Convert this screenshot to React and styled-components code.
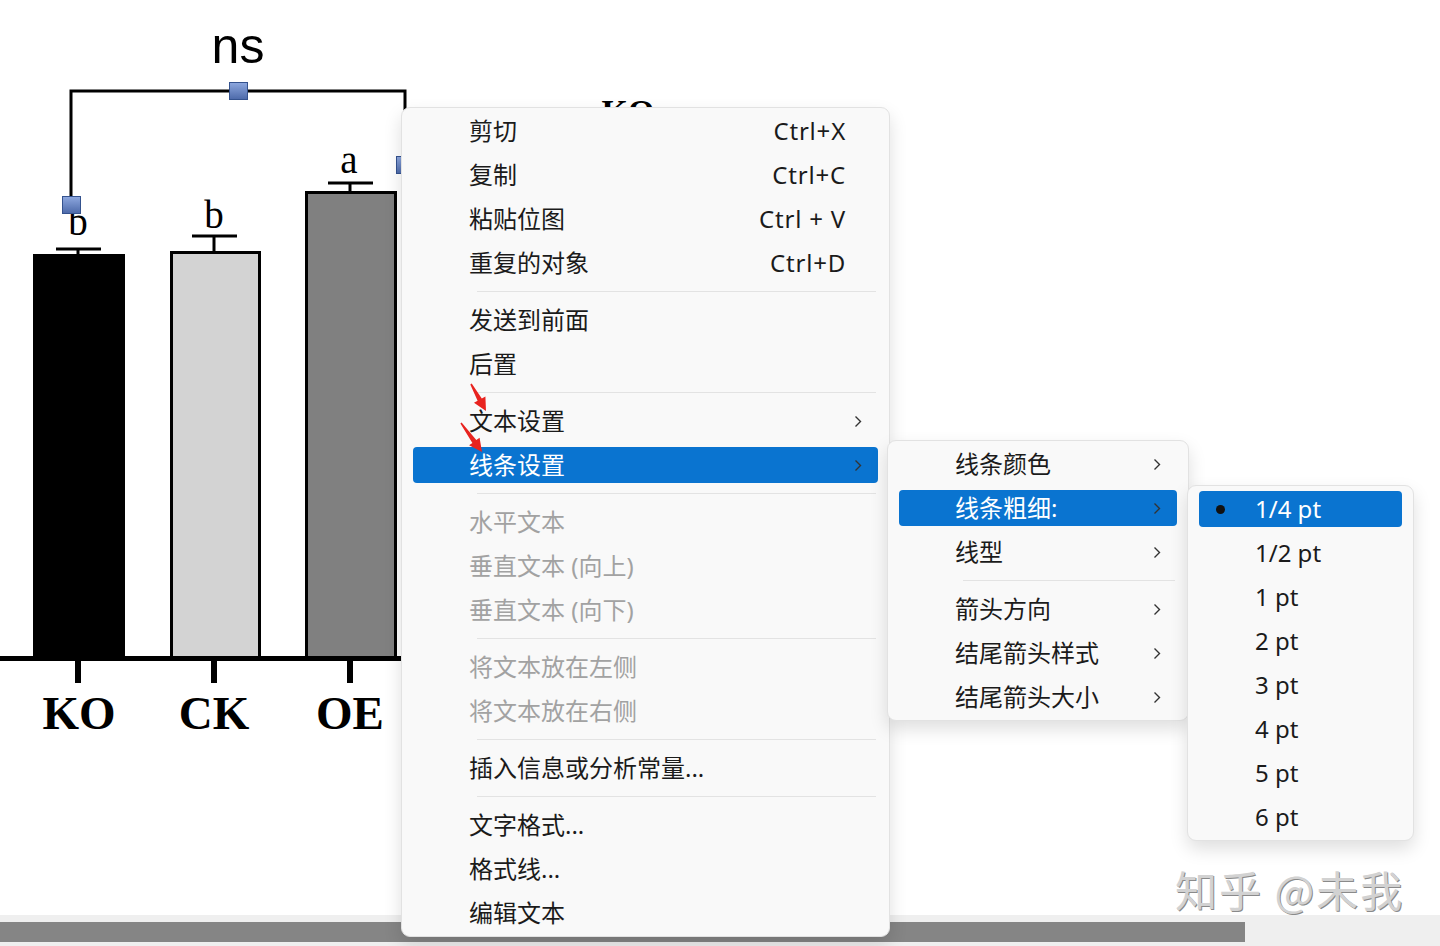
import React from 'react'
import styled, { createGlobalStyle } from 'styled-components'

const GlobalStyle = createGlobalStyle`
  html, body {
    margin: 0;
    padding: 0;
    background: #ffffff;
  }
  body {
    font-family: 'Noto Sans', 'Noto Sans CJK SC', sans-serif;
  }
`

const Page = styled.div`
  position: relative;
  width: 1440px;
  height: 946px;
  overflow: hidden;
  display: flex;
  flex-direction: column;
  background: #ffffff;
`

const Canvas = styled.div`
  flex: 1;
  background: #ffffff;
`

const ScrollTrack = styled.div`
  height: 31px;
  box-sizing: border-box;
  padding: 7px 0 4px;
  background: #efefef;
`

const ScrollThumb = styled.div`
  width: 1245px;
  height: 100%;
  background: #858585;
`

const Menu = styled.div`
  position: absolute;
  left: ${p => p.$x}px;
  top: ${p => p.$y}px;
  width: ${p => p.$w}px;
  box-sizing: border-box;
  display: flex;
  flex-direction: column;
  padding: 1px 0;
  background: #f9f9f9;
  border: 1px solid #e2e2e2;
  border-radius: 9px;
  box-shadow: 0 8px 18px rgba(0, 0, 0, 0.13);
  font-family: 'Noto Sans', 'Noto Sans CJK SC', sans-serif;
  font-size: 24px;
`

const Item = styled.div`
  display: flex;
  align-items: center;
  height: 36px;
  margin: 4px 11px;
  padding: 0 16px 0 14px;
  border-radius: 4px;
  line-height: 1;
  background: ${p => (p.$active ? '#0a74d0' : 'transparent')};
  color: ${p => (p.$active ? '#ffffff' : p.$disabled ? '#a2a2a2' : '#1b1b1b')};
`

const Lead = styled.span`
  width: 42px;
  flex: none;
  display: flex;
  align-items: center;
  padding-left: 3px;
  box-sizing: border-box;
`

const Bullet = styled.span`
  width: 9px;
  height: 9px;
  border-radius: 50%;
  background: #111;
`

const Label = styled.span`
  flex: 1;
  white-space: nowrap;
`

const Shortcut = styled.span`
  white-space: pre;
  letter-spacing: 0.8px;
  color: #1b1b1b;
`

const ArrowCell = styled.span`
  width: 16px;
  flex: none;
  display: flex;
  justify-content: flex-end;
  align-items: center;
`

const Separator = styled.div`
  height: 1px;
  flex: none;
  margin: 6px 13px 6px 75px;
  background: #e3e3e3;
`

const Watermark = styled.div`
  position: absolute;
  left: 1175px;
  top: 858px;
  font-family: 'Noto Sans CJK SC', sans-serif;
  font-size: 42px;
  letter-spacing: 2px;
  color: #d2d2d2;
  text-shadow: 1px 1px 0 #8a8a8a;
  white-space: pre;
`

const Marker = styled.svg`
  position: absolute;
  left: 0;
  top: 0;
  pointer-events: none;
`

const Chevron = () => (
  <svg width="8" height="13" viewBox="0 0 8 13">
    <path d="M1.5 1.5 L6.5 6.5 L1.5 11.5" fill="none" stroke="#333" strokeWidth="1.4" />
  </svg>
)

// red hand-drawn style arrow, from tail to tip
const arrowPoints = (tx, ty, hx, hy) => {
  const dx = hx - tx
  const dy = hy - ty
  const len = Math.hypot(dx, dy)
  const ux = dx / len
  const uy = dy / len
  const px = uy
  const py = -ux
  const bx = hx - ux * 13
  const by = hy - uy * 13
  const pt = (x, y) => `${x.toFixed(1)},${y.toFixed(1)}`
  return [
    pt(tx + px * 0.8, ty + py * 0.8),
    pt(bx + px * 2.4, by + py * 2.4),
    pt(bx + px * 6.5, by + py * 6.5),
    pt(hx, hy),
    pt(bx - px * 6.5, by - py * 6.5),
    pt(bx - px * 2.4, by - py * 2.4),
    pt(tx - px * 0.8, ty - py * 0.8),
  ].join(' ')
}

const Arrows = () => (
  <Marker width="1440" height="946">
    <polygon points={arrowPoints(471, 384, 486, 411)} fill="#e8231f" />
    <polygon points={arrowPoints(461, 423, 482, 452)} fill="#e8231f" />
  </Marker>
)

const mainItems = [
  { label: '剪切', key: 'Ctrl+X' },
  { label: '复制', key: 'Ctrl+C' },
  { label: '粘贴位图', key: 'Ctrl + V' },
  { label: '重复的对象', key: 'Ctrl+D' },
  'sep',
  { label: '发送到前面' },
  { label: '后置' },
  'sep',
  { label: '文本设置', sub: true },
  { label: '线条设置', sub: true, active: true },
  'sep',
  { label: '水平文本', disabled: true },
  { label: '垂直文本 (向上)', disabled: true },
  { label: '垂直文本 (向下)', disabled: true },
  'sep',
  { label: '将文本放在左侧', disabled: true },
  { label: '将文本放在右侧', disabled: true },
  'sep',
  { label: '插入信息或分析常量...' },
  'sep',
  { label: '文字格式...' },
  { label: '格式线...' },
  { label: '编辑文本' },
]

const lineItems = [
  { label: '线条颜色', sub: true },
  { label: '线条粗细:', sub: true, active: true },
  { label: '线型', sub: true },
  'sep',
  { label: '箭头方向', sub: true },
  { label: '结尾箭头样式', sub: true },
  { label: '结尾箭头大小', sub: true },
]

const weightItems = [
  { label: '1/4 pt', active: true, checked: true },
  { label: '1/2 pt' },
  { label: '1 pt' },
  { label: '2 pt' },
  { label: '3 pt' },
  { label: '4 pt' },
  { label: '5 pt' },
  { label: '6 pt' },
]

const MenuList = ({ items, x, y, w }) => (
  <Menu $x={x} $y={y} $w={w}>
    {items.map((it, i) =>
      it === 'sep' ? (
        <Separator key={i} />
      ) : (
        <Item key={i} $active={it.active} $disabled={it.disabled}>
          <Lead>{it.checked && <Bullet />}</Lead>
          <Label>{it.label}</Label>
          {it.key && <Shortcut>{it.key}</Shortcut>}
          <ArrowCell>{it.sub && <Chevron />}</ArrowCell>
        </Item>
      )
    )}
  </Menu>
)

// the bar chart behind the menus
const Handle = ({ x, y }) => (
  <rect x={x} y={y} width="18" height="17" fill="url(#handle)" stroke="#34528e" strokeWidth="1" />
)

const ErrorBar = ({ cx, top, bottom }) => (
  <g stroke="#000" strokeWidth="3">
    <line x1={cx - 22} y1={top} x2={cx + 23} y2={top} />
    <line x1={cx} y1={top} x2={cx} y2={bottom} />
  </g>
)

const serif = "'Liberation Serif', 'Times New Roman', serif"

const Chart = () => (
  <svg width="700" height="760" viewBox="0 0 700 760" style={{ display: 'block' }}>
    <defs>
      <linearGradient id="handle" x1="0" y1="0" x2="0" y2="1">
        <stop offset="0" stopColor="#8ea8df" />
        <stop offset="1" stopColor="#4c69a9" />
      </linearGradient>
    </defs>
    <text x="238" y="63" textAnchor="middle" fontFamily="'Liberation Sans', Arial, sans-serif" fontSize="50">
      ns
    </text>
    <text x="628" y="123" textAnchor="middle" fontFamily={serif} fontWeight="bold" fontSize="34">
      KO
    </text>
    <path d="M71 205 V91 H405 V130" fill="none" stroke="#000" strokeWidth="3" />

    <rect x="33" y="254" width="92" height="404" fill="#000" />
    <rect x="171.5" y="252.5" width="88" height="405" fill="#d3d3d3" stroke="#000" strokeWidth="3" />
    <rect x="306.5" y="192.5" width="89" height="465" fill="#808080" stroke="#000" strokeWidth="3" />

    <ErrorBar cx={78} top={249} bottom={254} />
    <ErrorBar cx={214} top={236} bottom={252} />
    <ErrorBar cx={350} top={183} bottom={192} />

    <text x="78" y="235" textAnchor="middle" fontFamily={serif} fontSize="39">b</text>
    <text x="214" y="228" textAnchor="middle" fontFamily={serif} fontSize="39">b</text>
    <text x="349" y="173" textAnchor="middle" fontFamily={serif} fontSize="39">a</text>

    <Handle x={229.5} y={82.5} />
    <Handle x={62.5} y={196.5} />
    <Handle x={396.5} y={156.5} />

    <rect x="0" y="656" width="402" height="5" fill="#000" />
    <rect x="75" y="661" width="6" height="22" fill="#000" />
    <rect x="211" y="661" width="6" height="22" fill="#000" />
    <rect x="347" y="661" width="6" height="22" fill="#000" />

    <g fontFamily={serif} fontWeight="bold" fontSize="47" textAnchor="middle">
      <text x="79" y="729">KO</text>
      <text x="214" y="729">CK</text>
      <text x="350" y="729">OE</text>
    </g>
  </svg>
)

export default function App() {
  return (
    <>
      <GlobalStyle />
      <Page>
        <Canvas>
          <Chart />
        </Canvas>
        <ScrollTrack>
          <ScrollThumb />
        </ScrollTrack>
        <Watermark>知乎 @未我</Watermark>
        <MenuList items={mainItems} x={401} y={107} w={489} />
        <MenuList items={lineItems} x={887} y={440} w={302} />
        <MenuList items={weightItems} x={1187} y={485} w={227} />
        <Arrows />
      </Page>
    </>
  )
}
